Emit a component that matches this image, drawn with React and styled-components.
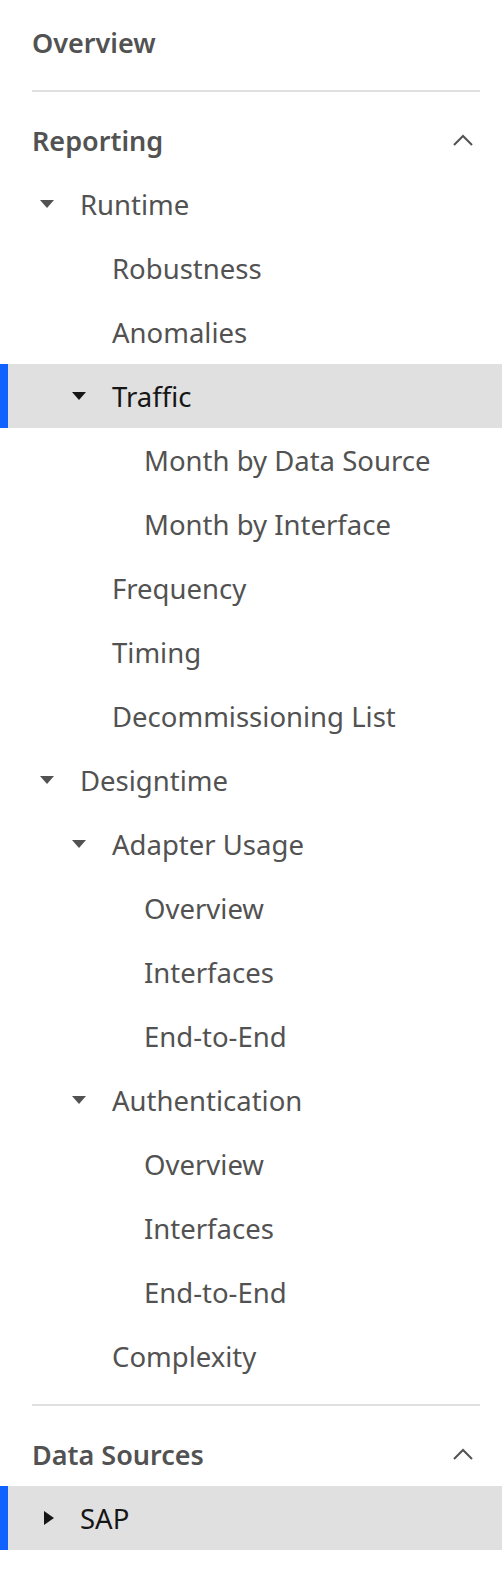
import React from 'react';
import styled, { createGlobalStyle } from 'styled-components';

const GlobalStyle = createGlobalStyle`
  body {
    margin: 0;
    background: #ffffff;
    font-family: "Noto Sans", "Open Sans", sans-serif;
  }
`;

const Nav = styled.nav`
  width: 502px;
  padding-top: 10px;
`;

const Heading = styled.div`
  height: 64px;
  display: flex;
  align-items: center;
  justify-content: space-between;
  padding: 0 29px 0 32px;
  font-size: 27px;
  font-weight: 600;
  color: #525252;
`;

const Divider = styled.hr`
  border: none;
  height: 2px;
  background: #e0e0e0;
  margin: 16px 22px 16px 32px;
`;

const Row = styled.div`
  height: 64px;
  display: flex;
  align-items: center;
  box-sizing: border-box;
  padding-left: ${(p) => 32 + p.$depth * 32}px;
  font-size: 27.5px;
  color: ${(p) => (p.$selected ? '#161616' : '#525252')};
  background: ${(p) => (p.$selected ? '#e0e0e0' : 'transparent')};
  border-left: 8px solid ${(p) => (p.$selected ? '#0f62fe' : 'transparent')};
`;

const CaretBox = styled.span`
  width: 14px;
  height: 14px;
  margin-right: 26px;
  display: flex;
  flex-shrink: 0;
`;

const Spacer = styled.span`
  width: 40px;
  flex-shrink: 0;
`;

const Label = styled.span`
  white-space: nowrap;
`;

const Caret = ({ open, color }) => (
  <CaretBox>
    <svg width="14" height="14" viewBox="0 0 14 14">
      {open ? (
        <polygon points="0,3 14,3 7,11" fill={color} />
      ) : (
        <polygon points="4,0 14,7 4,14" fill={color} />
      )}
    </svg>
  </CaretBox>
);

const Chevron = () => (
  <svg width="20" height="12" viewBox="0 0 20 12">
    <polyline points="1,11 10,2 19,11" fill="none" stroke="#525252" strokeWidth="2" />
  </svg>
);

const TreeRow = ({ label, depth, caret, selected }) => (
  <Row $depth={depth} $selected={selected}>
    {caret ? <Caret open={caret === 'open'} color={selected ? '#161616' : '#525252'} /> : <Spacer />}
    <Label>{label}</Label>
  </Row>
);

const reporting = [
  ['Runtime', 0, 'open'],
  ['Robustness', 1],
  ['Anomalies', 1],
  ['Traffic', 1, 'open', true],
  ['Month by Data Source', 2],
  ['Month by Interface', 2],
  ['Frequency', 1],
  ['Timing', 1],
  ['Decommissioning List', 1],
  ['Designtime', 0, 'open'],
  ['Adapter Usage', 1, 'open'],
  ['Overview', 2],
  ['Interfaces', 2],
  ['End-to-End', 2],
  ['Authentication', 1, 'open'],
  ['Overview', 2],
  ['Interfaces', 2],
  ['End-to-End', 2],
  ['Complexity', 1],
];

export default function App() {
  return (
    <Nav>
      <GlobalStyle />
      <Heading>Overview</Heading>
      <Divider />
      <Heading>
        Reporting
        <Chevron />
      </Heading>
      {reporting.map(([label, depth, caret, selected], i) => (
        <TreeRow key={i} label={label} depth={depth} caret={caret} selected={selected} />
      ))}
      <Divider />
      <Heading>
        Data Sources
        <Chevron />
      </Heading>
      <TreeRow label="SAP" depth={0} caret="closed" selected />
    </Nav>
  );
}
